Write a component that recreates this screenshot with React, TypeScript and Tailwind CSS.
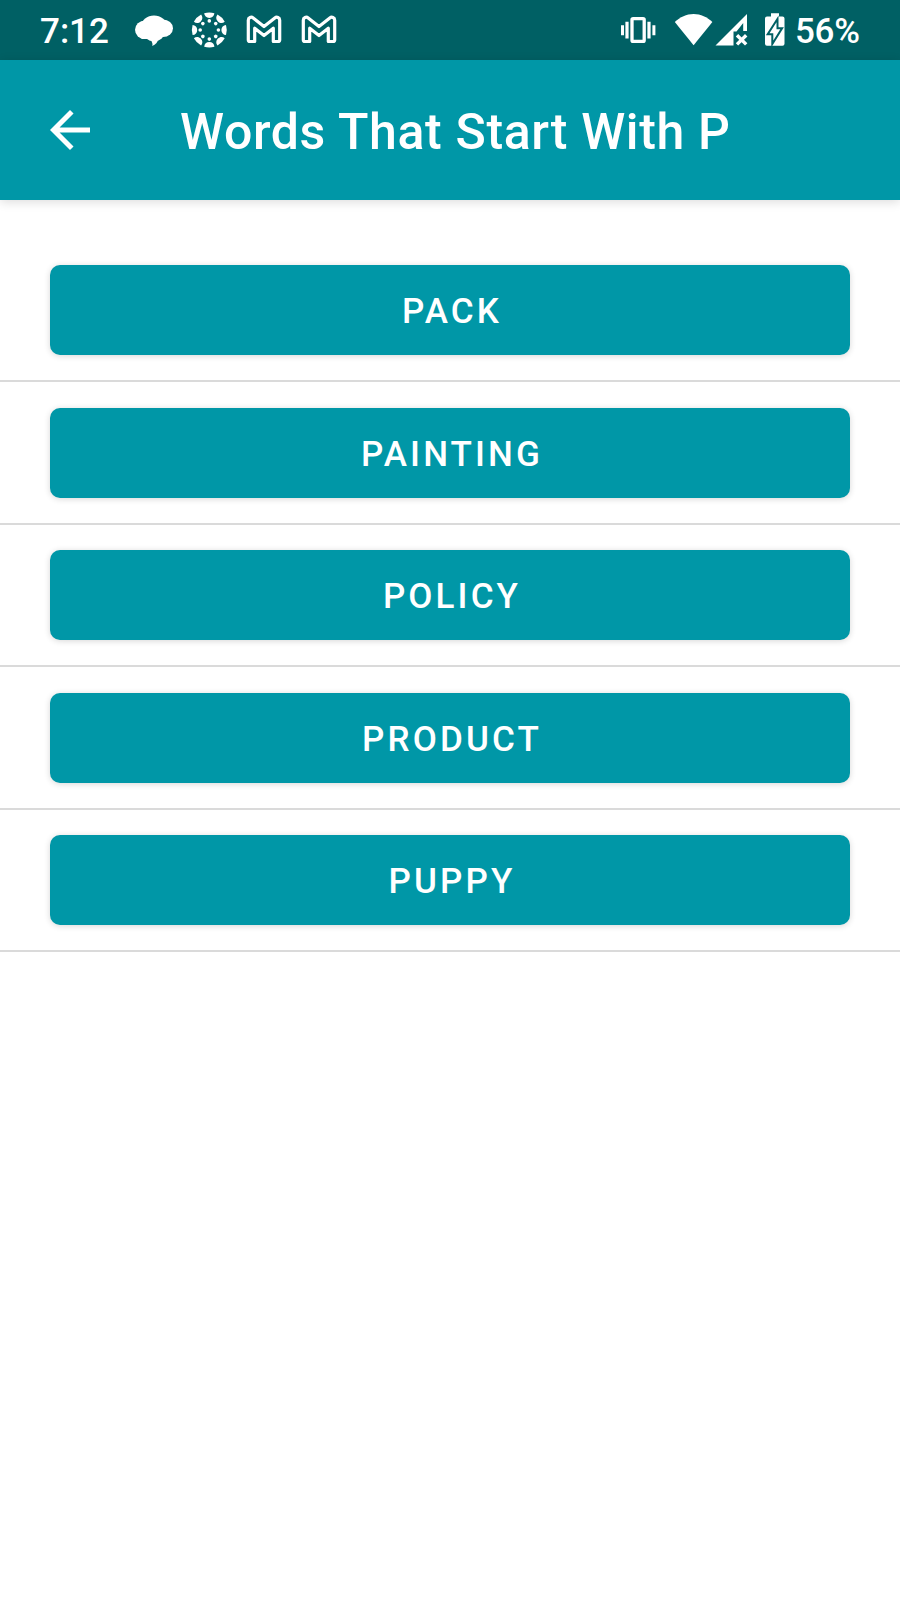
const words = ['PACK', 'PAINTING', 'POLICY', 'PRODUCT', 'PUPPY'];
const spokes = [0, 45, 90, 135, 180, 225, 270, 315];

function ChatIcon() {
  return (
    <svg className="ml-[25px] shrink-0" width="40" height="60" viewBox="134 0 40 60" fill="#fff">
      <ellipse cx="154" cy="26" rx="12.500" ry="10.500" />
      <ellipse cx="145" cy="29.800" rx="10" ry="9.300" />
      <ellipse cx="163" cy="28.300" rx="10" ry="8.800" />
      <ellipse cx="154" cy="32.500" rx="10.500" ry="8.700" />
      <path d="M150.500 39.500h7.500c-.3 2.800-2.300 5.200-5.800 6.600.7-1.700.2-3.600-1.700-6.600z" />
    </svg>
  );
}

function CanvasIcon() {
  return (
    <svg className="ml-[17px] shrink-0" width="37" height="60" viewBox="191 0 37 60" fill="#fff">
      {spokes.map((a) => (
        <g key={a} transform={`rotate(${a} 209.300 30)`}>
          <path d="M204.200 13.300A17.500 17.500 0 0 1 214.400 13.300C214.200 16 212.300 17.900 209.300 17.900S204.400 16 204.200 13.300z" />
          <circle cx="209.300" cy="20.900" r="1.800" />
        </g>
      ))}
    </svg>
  );
}

function MailIcon({ className }: { className: string }) {
  return (
    <svg className={className} width="36" height="60" viewBox="246 0 36 60" fill="none" stroke="#fff" strokeWidth="3.200" strokeLinejoin="round">
      <path d="M248.300 40V20.200C248.300 17.500 251.200 16.400 253.200 18L264 26.500 274.800 18C276.800 16.400 279.700 17.500 279.700 20.200V40Q279.700 41.500 278 41.500H273.300V28.200L264 35.500 254.700 28.200V41.500H250Q248.300 41.500 248.300 40z" />
    </svg>
  );
}

function VibrateIcon() {
  return (
    <svg className="shrink-0" width="36" height="60" viewBox="620 0 36 60" fill="#fff">
      <rect x="632" y="18.600" width="12.200" height="22.800" rx="1.200" fill="none" stroke="#fff" strokeWidth="3.300" />
      <path d="M625.400 21.800h3.200v16.800h-3.200zM621 25.200h3v10H621zM647.400 21.800h3.200v16.800h-3.200zM652.400 25.200h3v10h-3z" />
    </svg>
  );
}

function WifiIcon() {
  return (
    <svg className="ml-[18px] shrink-0" width="40" height="60" viewBox="674 0 40 60" fill="#fff">
      <path d="M693.600 45.300L674.800 22C680 17 686.500 14 693.600 14S707.200 17 712.400 22z" />
    </svg>
  );
}

function SignalIcon() {
  return (
    <svg className="shrink-0" width="34" height="60" viewBox="714 0 34 60" fill="#fff">
      <path d="M715.500 45.500L747 14V31H743.200V23L736.500 31.500H733.500V45.500z" />
      <path d="M737 35.200l9.200 9.200M746.200 35.200l-9.200 9.200" stroke="#fff" strokeWidth="3.400" />
    </svg>
  );
}

function BatteryIcon() {
  return (
    <svg className="ml-[16px] shrink-0" width="22" height="60" viewBox="764 0 22 60" fill="#fff">
      <path d="M771 13.300h8v3.300h3.500q2 0 2 2V43.700q0 2-2 2H767q-2 0-2-2V18.600q0-2 2-2H771z" />
      <path d="M776.500 22.300V29.300H780.300L773.300 40.500V33.300H769.500z" stroke="#006064" strokeWidth="4" paintOrder="stroke" />
    </svg>
  );
}

export default function App() {
  return (
    <div className="flex min-h-[1600px] w-full flex-col bg-white font-['Roboto',sans-serif] font-medium text-white">
      <div className="flex h-[60px] items-center bg-[#006064] pl-[40px] pr-[41px]">
        <span className="w-[69px] whitespace-nowrap pt-[3px] text-[35px] leading-[57px]">7:12</span>
        <ChatIcon />
        <CanvasIcon />
        <MailIcon className="ml-[18px] shrink-0" />
        <MailIcon className="ml-[19px] shrink-0" />
        <div className="ml-auto flex items-center">
          <VibrateIcon />
          <WifiIcon />
          <SignalIcon />
          <BatteryIcon />
          <span className="ml-[9px] w-[64px] whitespace-nowrap pt-[3px] text-[35px] leading-[57px] tracking-[-0.3px]">56%</span>
        </div>
      </div>
      <header className="z-10 flex h-[140px] items-center bg-[#0097a7] pl-[40px] shadow-[0_2px_10px_rgba(0,0,0,0.14)]">
        <svg width="60" height="60" viewBox="0 0 24 24" fill="#fff">
          <path d="M20 11H7.830l5.590-5.590L12 4l-8 8 8 8 1.410-1.410L7.830 13H20v-2z" />
        </svg>
        <h1 className="ml-[80px] whitespace-nowrap pt-[4px] text-[50px] leading-[60px] tracking-[0.65px]">Words That Start With P</h1>
      </header>
      <main className="flex flex-col pt-[40px]">
        {words.map((word) => (
          <div key={word} className="flex h-[142.5px] flex-col gap-[25px] pt-[25px]">
            <button className="mx-[50px] block h-[90px] shrink-0 rounded-[10px] bg-[#0097a7] pl-[4px] pt-[3px] text-center text-[35px] leading-[87px] tracking-[3.125px] shadow-[0_1px_6px_rgba(0,0,0,0.16)]">
              {word}
            </button>
            <div className="h-[2px] shrink-0 bg-[#dadada]" />
          </div>
        ))}
      </main>
    </div>
  );
}
